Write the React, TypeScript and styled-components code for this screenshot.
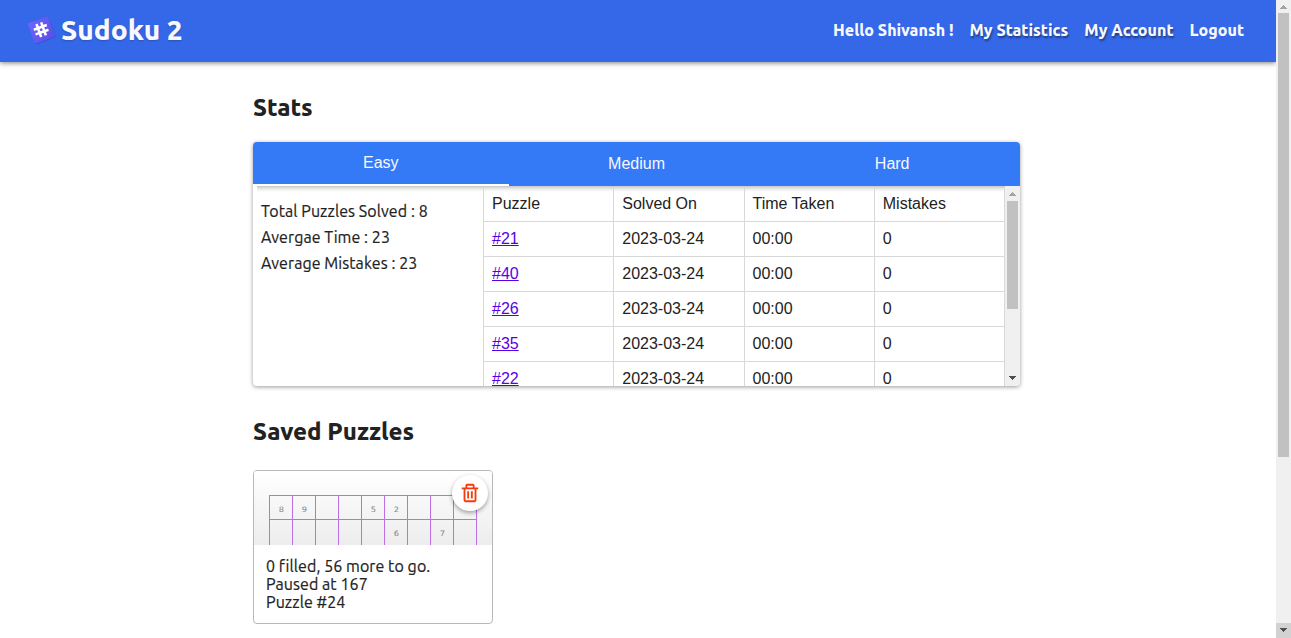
import React from 'react';
import styled, { createGlobalStyle, css } from 'styled-components';
import { BiTrash } from 'react-icons/bi';

const ui = "Ubuntu, 'Noto Sans', 'Open Sans', sans-serif";
const arial = "'Liberation Sans', Arial, sans-serif";

const GlobalStyle = createGlobalStyle`
  * { box-sizing: border-box; }
  body { margin: 0; background: #fff; color: #222; font-family: ${ui}; overflow: hidden; }
`;

const Window = styled.div`
  display: flex;
  height: 638px;
  overflow: hidden;
`;

const Page = styled.div`
  flex: 1;
  min-width: 0;
  overflow: hidden;
`;

const Nav = styled.nav`
  display: flex;
  align-items: center;
  justify-content: space-between;
  height: 62px;
  padding: 0 32px 2px 27px;
  background: #3468e8;
  color: #f8f8ff;
  box-shadow: 0 1px 5px rgba(0, 0, 0, 0.5);
`;

const Brand = styled.div`
  display: flex;
  align-items: center;
  gap: 5px;
`;

const BrandName = styled.span`
  margin-bottom: 2px;
  font-size: 28px;
  font-weight: 800;
  white-space: nowrap;
  text-shadow: 0 1px 2px rgba(0, 0, 0, 0.2);
`;

const Links = styled.div`
  display: flex;
  gap: 16px;
`;

const NavItem = styled.span<{ $raised?: boolean }>`
  font-size: 16px;
  font-weight: 800;
  white-space: nowrap;
  ${p => p.$raised && css`text-shadow: 1px 2px 2px rgba(0, 0, 0, 0.42);`}
`;

const Content = styled.main`
  width: 767px;
  margin-left: 253px;
`;

const Heading = styled.h2`
  margin: 30px 0 0;
  height: 32px;
  line-height: 32px;
  font-size: 24px;
  font-weight: 800;
  white-space: nowrap;
`;

const StatsCard = styled.section`
  height: 244px;
  margin-top: 18px;
  border-radius: 4px;
  overflow: hidden;
  box-shadow: 0 1px 4px rgba(0, 0, 0, 0.4);
`;

const Tabs = styled.div`
  display: flex;
  height: 44px;
  font: 16px ${arial};
`;

const Tab = styled.div<{ $active?: boolean }>`
  flex: 1;
  display: flex;
  align-items: center;
  justify-content: center;
  background: #347af7;
  color: #f8f8ff;
  border-bottom: ${p => (p.$active ? '2px solid #fff' : '0')};
`;

const StatsBody = styled.div`
  display: flex;
  height: 200px;
  background: linear-gradient(rgba(0, 0, 0, 0.22), rgba(0, 0, 0, 0.08) 3px, transparent 6px) 4px 0 / 100% 6px no-repeat;
`;

const Summary = styled.div`
  width: 230px;
  padding: 12px 8px;
  line-height: 26px;
`;

const Table = styled.div`
  flex: 1;
  padding-top: 1px;
  overflow: hidden;
  font: 16px ${arial};
`;

const Row = styled.div`
  display: grid;
  grid-template-columns: repeat(4, 1fr);
  height: 35px;
  border-bottom: 1px solid #d8d8d8;
  border-right: 1px solid #d8d8d8;
`;

const Cell = styled.div`
  padding-left: 8px;
  line-height: 33px;
  border-left: 1px solid #d8d8d8;
`;

const PuzzleLink = styled.a`
  color: #5a00e6;
  text-decoration: underline;
`;

const ScrollTrack = styled.div`
  display: flex;
  flex-direction: column;
  align-items: center;
  flex: none;
  width: 15px;
  background: #f0f0f0;
`;

const ScrollButton = styled.div<{ $h: number; $down?: boolean; $shaded?: boolean }>`
  display: flex;
  align-items: center;
  justify-content: center;
  width: 15px;
  height: ${p => p.$h}px;
  padding-bottom: ${p => (p.$down ? 1 : 0)}px;
  background: ${p => (p.$shaded ? '#d2d2d2' : 'transparent')};
`;

const Thumb = styled.div<{ $h: number }>`
  width: 11px;
  height: ${p => p.$h}px;
  margin-bottom: auto;
  background: #c1c1c1;
`;

const Arrow = ({ down }: { down?: boolean }) => (
  <svg width="7" height="4" viewBox="0 0 7 4" shapeRendering="crispEdges">
    {down ? <path d="M0 0h7v1H6v1H5v1H4v1H3V3H2V2H1V1H0z" fill="#505050" /> : <path d="M3 0h1v1h1v1h1v1h1v1H0V3h1V2h1V1h1z" fill="#a3a3a3" />}
  </svg>
);

const Scrollbar = ({ button, thumb, shaded }: { button: number; thumb: number; shaded?: boolean }) => (
  <ScrollTrack>
    <ScrollButton $h={button}><Arrow /></ScrollButton>
    <Thumb $h={thumb} />
    <ScrollButton $h={15} $down $shaded={shaded}><Arrow down /></ScrollButton>
  </ScrollTrack>
);

const PuzzleCard = styled.article`
  position: relative;
  width: 240px;
  height: 154px;
  margin-top: 22px;
  border: 1px solid #b8b8b8;
  border-radius: 4px;
`;

const Preview = styled.div`
  height: 74px;
  padding: 24px 15px 0;
  overflow: hidden;
  border-radius: 3px 3px 0 0;
  background: linear-gradient(#fff, #ededed);
`;

const Board = styled.div`
  display: grid;
  grid-template-columns: repeat(9, 23px);
  grid-template-rows: 24px 26px;
  width: 208px;
  border-right: 1px solid #bf6fe6;
`;

const Square = styled.div`
  padding-top: 3px;
  border-left: 1px solid #bf6fe6;
  border-top: 1px solid #bf6fe6;
  color: #858585;
  font: 7.4px/22px 'DejaVu Sans', sans-serif;
  text-align: center;
`;

const Digit = styled.span`
  display: inline-block;
  transform: scaleX(1.12);
`;

const DeleteButton = styled.div`
  position: absolute;
  top: 4px;
  right: 4px;
  display: flex;
  align-items: center;
  justify-content: center;
  width: 36px;
  height: 36px;
  border-radius: 50%;
  background: #fff;
  color: #f83a0c;
  box-shadow: 0 2px 4px rgba(0, 0, 0, 0.35);
`;

const Details = styled.div`
  padding: 12px;
  line-height: 18px;
`;

const Line = styled.div`
  font-size: 16px;
  letter-spacing: 0.07px;
  -webkit-text-stroke: 0.2px currentColor;
  white-space: nowrap;
`;

const Logo = () => (
  <svg width="29" height="30" viewBox="0 0 29 30">
    <defs>
      <linearGradient id="tile" x1="0" y1="0" x2="1" y2="1">
        <stop offset="0" stopColor="#6c65ff" />
        <stop offset="1" stopColor="#5a4ee8" />
      </linearGradient>
    </defs>
    <g transform="rotate(-20 14.5 15)">
      <rect x="4.1" y="5.2" width="21.6" height="21.6" rx="1.5" fill="#2340a0" opacity=".35" />
      <rect x="3.7" y="4.2" width="21.6" height="21.6" rx="1.5" fill="url(#tile)" />
      <path d="M11.8 7.7v13.8M16.8 7.7v13.8M7.4 12.1h13.8M7.4 17.1h13.8" stroke="#fff" strokeWidth="2.6" />
    </g>
  </svg>
);

const solved = ['#21', '#40', '#26', '#35', '#22'];
const board = ['8', '9', '', '', '5', '2', '', '', '', '', '', '', '', '', '6', '', '7', ''];

export default function App() {
  return (
    <Window>
      <GlobalStyle />
      <Page>
        <Nav>
          <Brand>
            <Logo />
            <BrandName>Sudoku 2</BrandName>
          </Brand>
          <Links>
            <NavItem>Hello Shivansh !</NavItem>
            <NavItem $raised>My Statistics</NavItem>
            <NavItem $raised>My Account</NavItem>
            <NavItem>Logout</NavItem>
          </Links>
        </Nav>
        <Content>
          <Heading>Stats</Heading>
          <StatsCard>
            <Tabs>
              <Tab $active>Easy</Tab>
              <Tab>Medium</Tab>
              <Tab>Hard</Tab>
            </Tabs>
            <StatsBody>
              <Summary>
                <Line>Total Puzzles Solved : 8</Line>
                <Line>Avergae Time : 23</Line>
                <Line>Average Mistakes : 23</Line>
              </Summary>
              <Table>
                <Row>
                  <Cell>Puzzle</Cell>
                  <Cell>Solved On</Cell>
                  <Cell>Time Taken</Cell>
                  <Cell>Mistakes</Cell>
                </Row>
                {solved.map(id => (
                  <Row key={id}>
                    <Cell><PuzzleLink>{id}</PuzzleLink></Cell>
                    <Cell>2023-03-24</Cell>
                    <Cell>00:00</Cell>
                    <Cell>0</Cell>
                  </Row>
                ))}
              </Table>
              <Scrollbar button={15} thumb={108} />
            </StatsBody>
          </StatsCard>
          <Heading>Saved Puzzles</Heading>
          <PuzzleCard>
            <Preview>
              <Board>{board.map((n, i) => <Square key={i}><Digit>{n}</Digit></Square>)}</Board>
            </Preview>
            <DeleteButton><BiTrash size={22} /></DeleteButton>
            <Details>
              <Line>0 filled, 56 more to go.</Line>
              <Line>Paused at 167</Line>
              <Line>Puzzle #24</Line>
            </Details>
          </PuzzleCard>
        </Content>
      </Page>
      <Scrollbar button={13} thumb={444} shaded />
    </Window>
  );
}
